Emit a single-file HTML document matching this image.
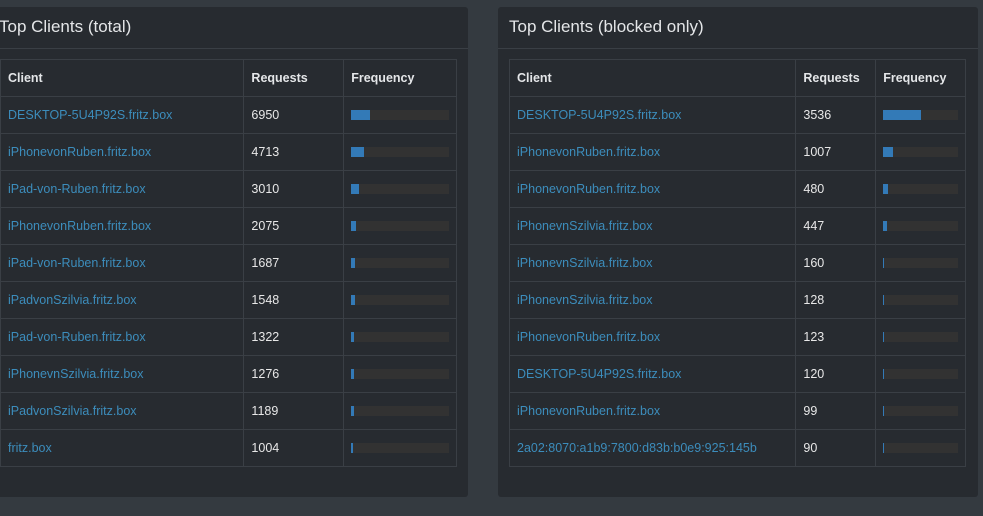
<!DOCTYPE html><html><head><style>
body{margin:0;width:983px;height:516px;background:#343a40;font-family:"Liberation Sans",sans-serif;overflow:hidden;position:relative}
.p{position:absolute;top:7px;height:490px;background:#272b30;border-radius:3px}
.h{height:41px;border-bottom:1px solid #3a3f45;color:#e4e6e8;font-size:17px;line-height:40px}
table{position:absolute;top:52px;border-collapse:collapse;font-size:12.5px}
td,th{border:1px solid #3a3f45;height:36px;padding:0 7px;text-align:left;color:#e8e8e8}
th{font-weight:bold;color:#e4e6e8}
td a{color:#3c8dbc}
.b{height:10px;background:#323232;position:relative}
.b i{position:absolute;left:0;top:0;height:10px;background:#337ab7}
</style></head><body>
<div class="p" style="left:-10px;width:478px"><div class="h" style="padding-left:9px">Top Clients (total)</div>
<table style="left:10px;width:457px"><colgroup><col style="width:244px"><col style="width:100px"><col style="width:113px"></colgroup>
<tr><th>Client</th><th>Requests</th><th>Frequency</th></tr>
<tr><td><a>DESKTOP-5U4P92S.fritz.box</a></td><td>6950</td><td><div class="b"><i style="width:19px"></i></div></td></tr>
<tr><td><a>iPhonevonRuben.fritz.box</a></td><td>4713</td><td><div class="b"><i style="width:13px"></i></div></td></tr>
<tr><td><a>iPad-von-Ruben.fritz.box</a></td><td>3010</td><td><div class="b"><i style="width:8px"></i></div></td></tr>
<tr><td><a>iPhonevonRuben.fritz.box</a></td><td>2075</td><td><div class="b"><i style="width:5px"></i></div></td></tr>
<tr><td><a>iPad-von-Ruben.fritz.box</a></td><td>1687</td><td><div class="b"><i style="width:4px"></i></div></td></tr>
<tr><td><a>iPadvonSzilvia.fritz.box</a></td><td>1548</td><td><div class="b"><i style="width:4px"></i></div></td></tr>
<tr><td><a>iPad-von-Ruben.fritz.box</a></td><td>1322</td><td><div class="b"><i style="width:3px"></i></div></td></tr>
<tr><td><a>iPhonevnSzilvia.fritz.box</a></td><td>1276</td><td><div class="b"><i style="width:3px"></i></div></td></tr>
<tr><td><a>iPadvonSzilvia.fritz.box</a></td><td>1189</td><td><div class="b"><i style="width:3px"></i></div></td></tr>
<tr><td><a>fritz.box</a></td><td>1004</td><td><div class="b"><i style="width:2px"></i></div></td></tr>
</table></div>
<div class="p" style="left:498px;width:480px"><div class="h" style="padding-left:11px">Top Clients (blocked only)</div>
<table style="left:11px;width:457px"><colgroup><col style="width:287px"><col style="width:80px"><col style="width:90px"></colgroup>
<tr><th>Client</th><th>Requests</th><th>Frequency</th></tr>
<tr><td><a>DESKTOP-5U4P92S.fritz.box</a></td><td>3536</td><td><div class="b"><i style="width:38px"></i></div></td></tr>
<tr><td><a>iPhonevonRuben.fritz.box</a></td><td>1007</td><td><div class="b"><i style="width:10px"></i></div></td></tr>
<tr><td><a>iPhonevonRuben.fritz.box</a></td><td>480</td><td><div class="b"><i style="width:5px"></i></div></td></tr>
<tr><td><a>iPhonevnSzilvia.fritz.box</a></td><td>447</td><td><div class="b"><i style="width:4px"></i></div></td></tr>
<tr><td><a>iPhonevnSzilvia.fritz.box</a></td><td>160</td><td><div class="b"><i style="width:1px"></i></div></td></tr>
<tr><td><a>iPhonevnSzilvia.fritz.box</a></td><td>128</td><td><div class="b"><i style="width:1px"></i></div></td></tr>
<tr><td><a>iPhonevonRuben.fritz.box</a></td><td>123</td><td><div class="b"><i style="width:1px"></i></div></td></tr>
<tr><td><a>DESKTOP-5U4P92S.fritz.box</a></td><td>120</td><td><div class="b"><i style="width:1px"></i></div></td></tr>
<tr><td><a>iPhonevonRuben.fritz.box</a></td><td>99</td><td><div class="b"><i style="width:1px"></i></div></td></tr>
<tr><td><a>2a02:8070:a1b9:7800:d83b:b0e9:925:145b</a></td><td>90</td><td><div class="b"><i style="width:1px"></i></div></td></tr>
</table></div>
</body></html>
